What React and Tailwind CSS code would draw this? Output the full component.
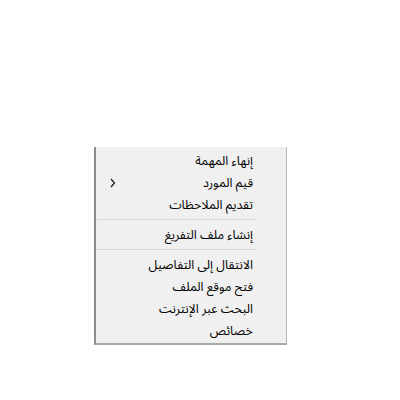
import React from 'react';

const groups = [
  [
    { label: 'إنهاء المهمة' },
    { label: 'قيم المورد', sub: true },
    { label: 'تقديم الملاحظات' },
  ],
  [{ label: 'إنشاء ملف التفريغ' }],
  [
    { label: 'الانتقال إلى التفاصيل' },
    { label: 'فتح موقع الملف' },
    { label: 'البحث عبر الإنترنت' },
    { label: 'خصائص' },
  ],
];

const MenuItem = ({ label, sub }) => (
  <div className="h-[22px] flex items-center justify-between pr-[33px] pl-[13px]">
    <span className="text-[12.5px] leading-[18px] text-black pt-[1px]">{label}</span>
    {sub && (
      <svg width="7" height="10" viewBox="0 0 7 10" className="mt-[1px]">
        <polyline points="2,1 5.5,5 2,9" fill="none" stroke="#222" strokeWidth="1.3" />
      </svg>
    )}
  </div>
);

const App = () => {
  return (
    <div className="w-[400px] h-[400px] bg-white pt-[147px] pl-[94px]">
      <div
        dir="rtl"
        className="w-[193px] h-[198px] bg-[#f0f0f0] border-l-2 border-l-[#8c8c8c] border-r border-r-[#b8b8b8] border-b-2 border-b-[#a8a8a8] pt-[2px]"
        style={{ fontFamily: '"Noto Sans Arabic", "DejaVu Sans", sans-serif' }}
      >
        {groups.map((group, i) => (
          <div key={i}>
            {i > 0 && (
              <div className="h-[8px] flex items-center pr-[30px] pl-[1px]">
                <div className="h-px w-full bg-[#d4d4d4]" />
              </div>
            )}
            {group.map((item) => (
              <MenuItem key={item.label} {...item} />
            ))}
          </div>
        ))}
      </div>
    </div>
  );
};

export default App;
